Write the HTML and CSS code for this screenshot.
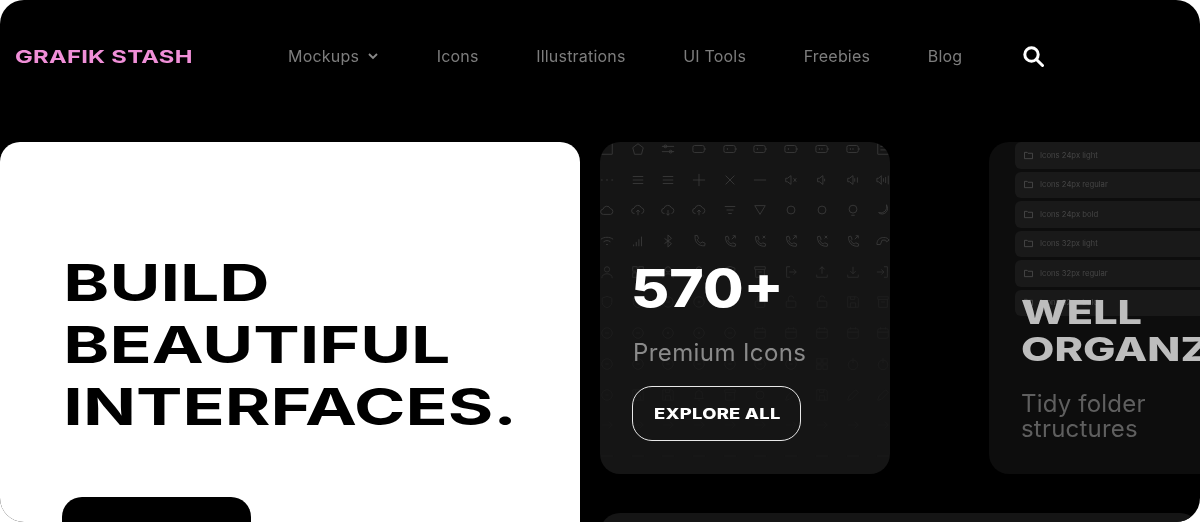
FILE: index.html
```html
<!DOCTYPE html>
<html lang="en">
<head>
    <meta charset="UTF-8">
    <meta name="viewport" content="width=device-width, initial-scale=1.0">
    <title>Grafik Stash</title>
    <link rel="stylesheet" href="styles.css">
</head>
<body>
    <div class="page">
        <header class="topbar">
            <a class="logo" href="#">GRAFIK STASH</a>
            <nav class="menu">
                <a href="#" class="menu-drop">Mockups
                    <svg width="12" height="12" viewBox="0 0 12 12" fill="none" stroke="#8a8a8a" stroke-width="1.8"><path d="M2 4l4 4 4-4"/></svg>
                </a>
                <a href="#">Icons</a>
                <a href="#">Illustrations</a>
                <a href="#">UI Tools</a>
                <a href="#">Freebies</a>
                <a href="#">Blog</a>
                <a href="#" class="menu-search" aria-label="Search">
                    <svg width="22" height="22" viewBox="0 0 22 22" fill="none" stroke="#fff" stroke-width="3"><circle cx="9.5" cy="9.5" r="6.7"/><path d="M14.5 14.5l6 6" stroke-linecap="round"/></svg>
                </a>
            </nav>
        </header>

        <main class="content">
            <section class="hero">
                <h1 class="wide">BUILD<br>BEAUTIFUL<br>INTERFACES.</h1>
                <a href="#" class="hero-button"></a>
            </section>

            <div class="side">
                <div class="cards">
                    <section class="card card-icons">
                        <div class="icon-grid" id="icon-grid"></div>
                        <h2 class="wide count">570+</h2>
                        <p class="card-text">Premium Icons</p>
                        <a href="#" class="outline-button"><span class="wide">EXPLORE ALL</span></a>
                    </section>

                    <section class="card card-folders">
                        <ul class="folder-list" id="folder-list"></ul>
                        <h2 class="wide folder-title">WELL<br>ORGANZED</h2>
                        <p class="card-text folder-text">Tidy folder<br>structures</p>
                    </section>
                </div>
                <div class="card-next"></div>
            </div>
        </main>
    </div>
    <script src="script.js"></script>
</body>
</html>
```

FILE: styles.css
```css
* {
    box-sizing: border-box;
}

body {
    margin: 0;
    background: #fff;
    font-family: 'Inter', sans-serif;
}

a {
    text-decoration: none;
}

.page {
    height: 522px;
    overflow: hidden;
    background: #000;
    border-radius: 24px;
}

.wide {
    display: block;
    margin: 0;
    font-family: 'Inter', sans-serif;
    font-weight: 800;
    transform-origin: left center;
    transform: scaleX(1.27);
    white-space: nowrap;
}

/* Barra superior */
.topbar {
    display: flex;
    align-items: center;
    height: 142px;
    padding: 0 0 30px 15px;
}

.logo {
    width: 273px;
    color: #f08fd8;
    font-size: 18px;
    font-weight: 700;
    letter-spacing: 0.2px;
    transform-origin: left center;
    transform: scaleX(1.32);
    white-space: nowrap;
}

.menu {
    display: flex;
    align-items: center;
    gap: 57.6px;
    will-change: transform;
}

.menu a {
    display: flex;
    align-items: center;
    gap: 8px;
    color: #7d7d7d;
    font-size: 16px;
    letter-spacing: 0.2px;
    white-space: nowrap;
}

.menu .menu-search {
    margin-left: 2px;
}

/* Conteudo */
.content {
    display: flex;
    gap: 20px;
    height: 380px;
}

.hero {
    flex: 0 0 580px;
    height: 400px;
    padding: 110px 0 0 62px;
    background: #fff;
    border-radius: 20px 20px 0 0;
}

.hero h1 {
    padding-left: 1px;
    color: #000;
    font-size: 51px;
    font-weight: 700;
    line-height: 62px;
    transform: scaleX(1.365);
}

.hero-button {
    display: block;
    width: 189px;
    height: 60px;
    margin-top: 59px;
    background: #000;
    border-radius: 20px;
}

.side {
    flex: 1;
    min-width: 0;
}

.cards {
    display: flex;
    gap: 99px;
    height: 332px;
}

.card {
    position: relative;
    overflow: hidden;
    height: 332px;
    border-radius: 20px;
}

.card-icons {
    flex: 0 0 290px;
    padding: 124px 0 0 33px;
    background: #151515;
}

.card-folders {
    flex: 0 0 320px;
    padding: 152px 0 0 32px;
    background: #0d0d0d;
}

.card-next {
    height: 60px;
    margin-top: 39px;
    background: #151515;
    border-radius: 20px;
}

/* Grade de icones atras do texto */
.icon-grid {
    position: absolute;
    top: 0;
    left: 0;
    display: grid;
    grid-template-columns: repeat(10, 14px);
    grid-auto-rows: 14px;
    column-gap: 16.7px;
    row-gap: 16.7px;
    -webkit-mask-image: linear-gradient(to bottom, #000 0, #000 110px, rgba(0, 0, 0, 0.3) 150px, rgba(0, 0, 0, 0.1) 300px);
    mask-image: linear-gradient(to bottom, #000 0, #000 110px, rgba(0, 0, 0, 0.3) 150px, rgba(0, 0, 0, 0.1) 300px);
}

.icon-grid svg {
    display: block;
    width: 14px;
    height: 14px;
    fill: none;
    stroke: #3a3a3a;
    stroke-width: 1;
}

.count {
    position: relative;
    left: -2px;
    color: #fff;
    font-size: 52px;
    line-height: 46px;
    transform: scaleX(1.13);
}

.card-text {
    position: relative;
    margin: 28px 0 0;
    color: #8a8a8a;
    font-size: 24px;
    letter-spacing: 0.4px;
    line-height: 25px;
    white-space: nowrap;
    will-change: transform;
}

.outline-button {
    position: relative;
    display: flex;
    align-items: center;
    width: 169px;
    height: 55px;
    margin: 21px 0 0 -1px;
    padding-left: 21px;
    border: 1px solid #e8e8e8;
    border-radius: 20px;
}

.outline-button .wide {
    color: #fff;
    font-size: 14.5px;
    letter-spacing: 0.2px;
}

/* Lista de pastas */
.folder-list {
    position: absolute;
    top: 0;
    left: 26px;
    right: 0;
    display: flex;
    flex-direction: column;
    gap: 3px;
    margin: 0;
    padding: 0;
    list-style: none;
    will-change: transform;
}

.folder-list li {
    display: flex;
    align-items: center;
    gap: 7px;
    height: 26.5px;
    padding-left: 9px;
    background: #191919;
    border-radius: 6px;
    color: #454545;
    font-size: 7.7px;
}

.folder-list svg {
    fill: none;
    stroke: #4a4a4a;
    stroke-width: 1;
}

.folder-title {
    position: relative;
    color: #bdbdbd;
    font-size: 33px;
    line-height: 37px;
    transform: scaleX(1.31);
}

.folder-text {
    margin-top: 23px;
    color: #5f5f5f;
    letter-spacing: 0.2px;
}
```

FILE: script.js
```js
// Desenhos dos icones, em uma caixa de 16x16
const shapes = {
    corner: '<path d="M2 14h12V2"/>',
    home: '<path d="M8 2l6 4.500-2 7.500H4L2 6.500z"/>',
    sliders: '<path d="M1 5h14M1 11h14"/><circle cx="5" cy="5" r="1.600"/><circle cx="11" cy="11" r="1.600"/>',
    battery: '<rect x="1" y="4" width="13" height="8" rx="2"/><path d="M15 7v2"/>',
    batteryOne: '<rect x="1" y="4" width="13" height="8" rx="2"/><path d="M15 7v2M5 7v2"/>',
    batteryTwo: '<rect x="1" y="4" width="13" height="8" rx="2"/><path d="M15 7v2M5 7v2M8 7v2"/>',
    chart: '<path d="M2 2v12h12M5 5h9M5 9h9"/>',
    dots: '<path d="M1 8h2M7 8h2M13 8h2"/>',
    menu: '<path d="M2 4h12M2 8h12M2 12h12"/>',
    plus: '<path d="M8 1v14M1 8h14"/>',
    close: '<path d="M3 3l10 10M13 3L3 13"/>',
    minus: '<path d="M1 8h14"/>',
    mute: '<path d="M2 6h2l4-3v10l-4-3H2zM11 6l3 4M14 6l-3 4"/>',
    volLow: '<path d="M3 6h2l4-3v10l-4-3H3zM11 6.500v3"/>',
    volMid: '<path d="M2 6h2l4-3v10l-4-3H2zM10 6v4M13 5v6"/>',
    volHigh: '<path d="M1 6h2l3-3v10l-3-3H1zM8.500 6v4M11 4.500v7M14 3v10"/>',
    cloud: '<path d="M4 13a3 3 0 0 1-.5-6A4.500 4.500 0 0 1 12 6.500a3.300 3.300 0 0 1 0 6.500z"/>',
    cloudUp: '<path d="M4 12a3 3 0 0 1-.5-6A4.500 4.500 0 0 1 12 5.500a3.300 3.300 0 0 1 0 6.500M8 14V8M6 10l2-2 2 2"/>',
    cloudDown: '<path d="M4 12a3 3 0 0 1-.5-6A4.500 4.500 0 0 1 12 5.500a3.300 3.300 0 0 1 0 6.500M8 8v6M6 12l2 2 2-2"/>',
    lines: '<path d="M2 4h12M4 8h8M6 12h4"/>',
    funnel: '<path d="M2 3h12l-6 10z"/>',
    circle: '<circle cx="8" cy="8" r="4.500"/>',
    bulb: '<circle cx="8" cy="7" r="4.500"/><path d="M6 14h4"/>',
    moon: '<path d="M12 2a7 7 0 0 1-9 9 6 6 0 0 0 9-1c1.500-2 1.500-5 0-8z"/>',
    wifi: '<path d="M1 6c4-3 10-3 14 0M4 9c2.500-2 5.500-2 8 0M7 12h2"/>',
    signal: '<path d="M3 14v-2M6 14V9M9 14V6M12 14V3"/>',
    bluetooth: '<path d="M4 5l8 6-4 4V1l4 4-8 6"/>',
    phone: '<path d="M3 2l3-.5 1.500 3.500-1.500 1.500c1 2 2 3 4 4l1.500-1.500 3.500 1.500-.5 3c-7 .5-11.500-4-11-11z"/>',
    phoneOut: '<path d="M3 3l2.500-.5L7 6 5.500 7.500c1 2 2 3 4 4L11 10l3.500 1.500-.5 2.500C7 14.500 2.500 10 3 3zM10 6l4-4M11 2h3v3"/>',
    phoneCut: '<path d="M3 3l2.500-.5L7 6 5.500 7.500c1 2 2 3 4 4L11 10l3.500 1.500-.5 2.500C7 14.500 2.500 10 3 3zM11 2l3 3M14 2l-3 3"/>',
    hangup: '<path d="M1 12c0-5 3-8 8-8 3 0 5 1 6 3l-3 2-1-2H7L5 12z"/>',
    user: '<circle cx="8" cy="5" r="3"/><path d="M2 15c0-3 2.500-5 6-5s6 2 6 5"/>',
    login: '<path d="M7 2H3v12h4M6 8h8M11 5l3 3-3 3"/>',
    upload: '<path d="M2 11v3h12v-3M8 10V2M5 5l3-3 3 3"/>',
    download: '<path d="M2 11v3h12v-3M8 2v8M5 7l3 3 3-3"/>',
    logout: '<path d="M9 2h4v12H9M1 8h8M6 5l3 3-3 3"/>',
    shield: '<path d="M8 1.500l5.500 2v5c0 3-2.500 5-5.500 6-3-1-5.500-3-5.500-6v-5z"/>',
    ring: '<circle cx="8" cy="8" r="6"/><path d="M6 8h4"/>',
    ringDot: '<circle cx="8" cy="8" r="6"/><circle cx="8" cy="8" r="1"/>',
    lock: '<rect x="2.500" y="7" width="11" height="7" rx="1"/><path d="M5 7V4a3 3 0 0 1 6 0v3"/>',
    unlock: '<rect x="2.500" y="7" width="11" height="7" rx="1"/><path d="M5 7V4a3 3 0 0 1 6 0"/>',
    save: '<path d="M2 2h10l2 2v10H2zM5 14V9h6v5M5 2v3h5V2"/>',
    archive: '<path d="M2 2h12v3H2zM3 5v9h10V5M6 8h4"/>',
    calendar: '<rect x="2" y="3" width="12" height="11" rx="2"/><path d="M5 1.500V4M11 1.500V4M2 7h12"/>',
    grid: '<rect x="2" y="2" width="5" height="5"/><rect x="9" y="2" width="5" height="5"/><rect x="2" y="9" width="5" height="5"/><rect x="9" y="9" width="5" height="5"/>',
    power: '<circle cx="8" cy="9" r="5.500"/><path d="M8 1v6"/>',
    edit: '<path d="M2 14l1-4 8-8 3 3-8 8z"/>',
    arrow: '<path d="M2 8h12M10 4l4 4-4 4"/>',
    bell: '<path d="M3 12c1-1 1-2 1-5a4 4 0 0 1 8 0c0 3 0 4 1 5zM7 14h2"/>'
};

const rows = [
    ['corner', 'home', 'sliders', 'battery', 'batteryOne', 'batteryOne', 'batteryOne', 'batteryTwo', 'batteryTwo', 'chart'],
    ['dots', 'menu', 'menu', 'plus', 'close', 'minus', 'mute', 'volLow', 'volMid', 'volHigh'],
    ['cloud', 'cloudUp', 'cloudDown', 'cloudUp', 'lines', 'funnel', 'circle', 'circle', 'bulb', 'moon'],
    ['wifi', 'signal', 'bluetooth', 'phone', 'phoneOut', 'phoneCut', 'phoneOut', 'phoneCut', 'phoneOut', 'hangup'],
    ['user', 'grid', 'user', 'user', 'shield', 'archive', 'login', 'upload', 'download', 'logout'],
    ['shield', 'shield', 'ring', 'ringDot', 'bell', 'lock', 'unlock', 'unlock', 'save', 'archive'],
    ['ring', 'ring', 'ringDot', 'ringDot', 'ring', 'calendar', 'calendar', 'calendar', 'calendar', 'calendar'],
    ['ring', 'ring', 'ring', 'ring', 'ring', 'ring', 'ring', 'grid', 'power', 'power'],
    ['ring', 'save', 'save', 'bell', 'archive', 'circle', 'edit', 'save', 'edit', 'edit'],
    ['arrow', 'arrow', 'arrow', 'arrow', 'arrow', 'arrow', 'arrow', 'arrow', 'arrow', 'arrow'],
    ['minus', 'minus', 'minus', 'minus', 'minus', 'minus', 'minus', 'minus', 'minus', 'minus']
];

const folders = [
    'Icons 24px light',
    'Icons 24px regular',
    'Icons 24px bold',
    'Icons 32px light',
    'Icons 32px regular',
    'Icons 32px bold'
];

function generateIcons() {
    const container = document.getElementById('icon-grid');
    rows.forEach((row) => {
        row.forEach((name) => {
            container.insertAdjacentHTML('beforeend', `<svg viewBox="0 0 16 16">${shapes[name]}</svg>`);
        });
    });
}

function generateFolders() {
    const container = document.getElementById('folder-list');
    folders.forEach((label) => {
        container.insertAdjacentHTML('beforeend',
            `<li><svg width="9" height="9" viewBox="0 0 10 10"><path d="M.5 1.500h3l1 1h5v6h-9z"/></svg>${label}</li>`);
    });
}

generateIcons();
generateFolders();
```
